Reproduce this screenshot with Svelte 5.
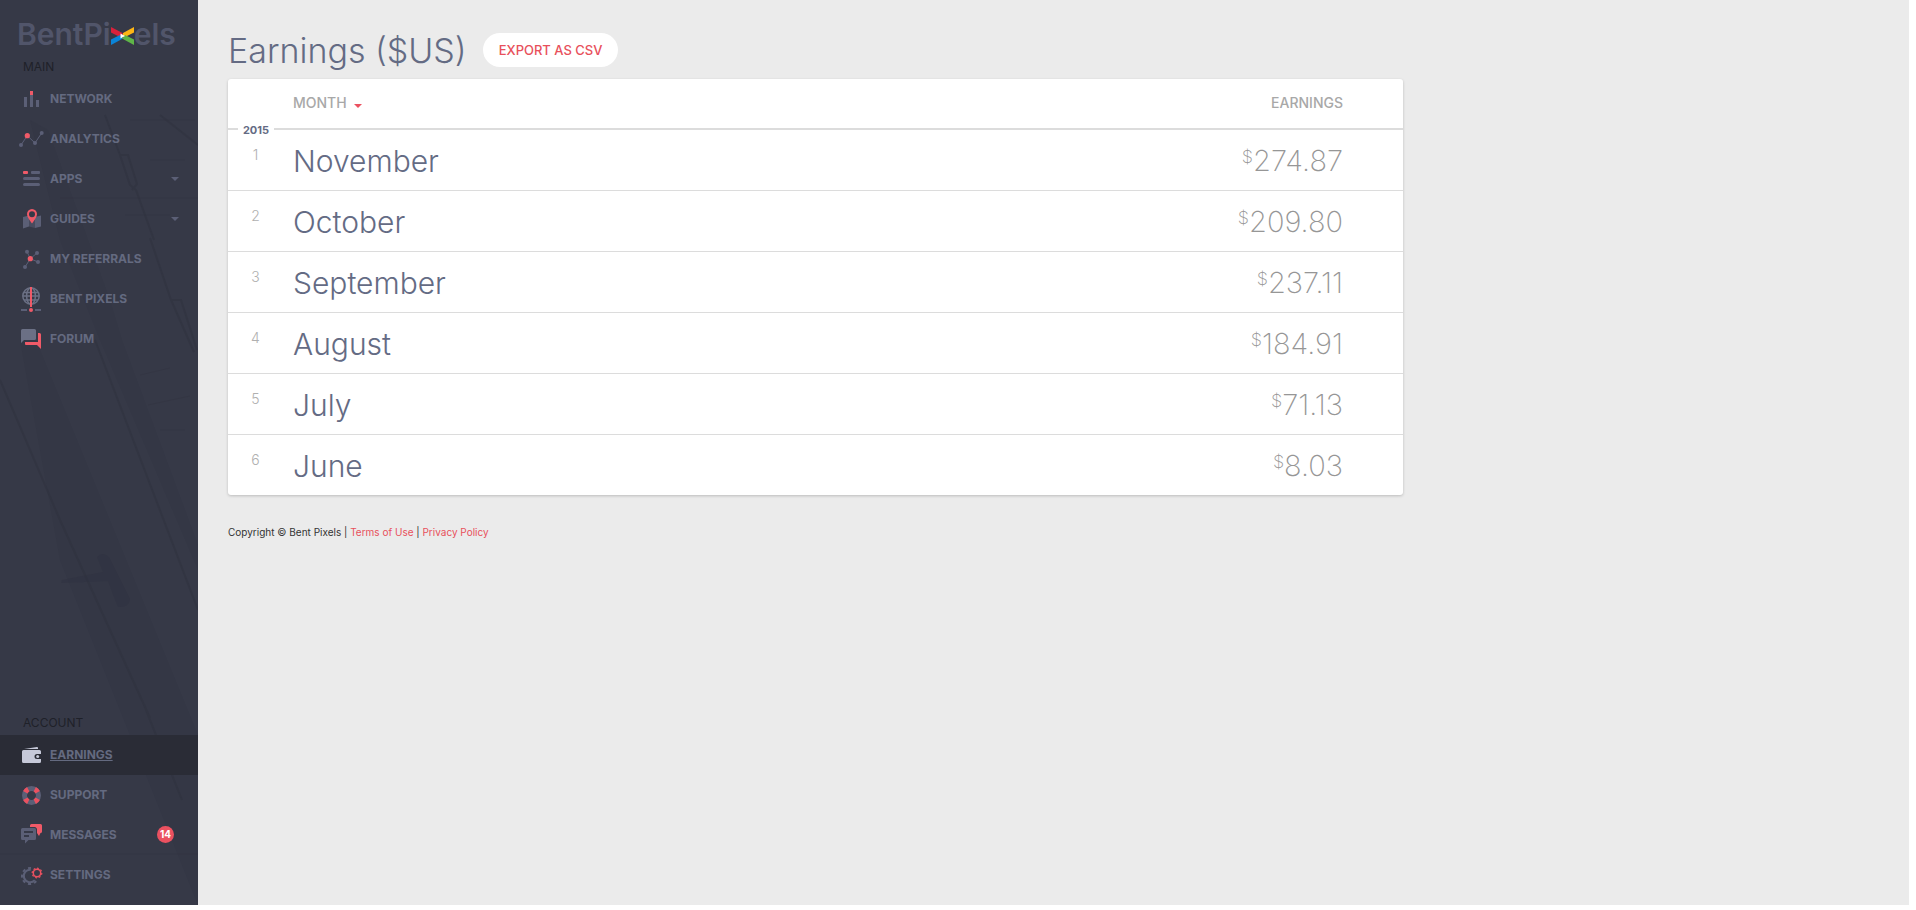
<script lang="ts">
  type Item = { label: string; icon: string; menu?: boolean; active?: boolean; count?: number };

  const mainItems: Item[] = [
    { label: 'NETWORK', icon: 'network' },
    { label: 'ANALYTICS', icon: 'analytics' },
    { label: 'APPS', icon: 'apps', menu: true },
    { label: 'GUIDES', icon: 'guides', menu: true },
    { label: 'MY REFERRALS', icon: 'referrals' },
    { label: 'BENT PIXELS', icon: 'globe' },
    { label: 'FORUM', icon: 'forum' }
  ];

  const accountItems: Item[] = [
    { label: 'EARNINGS', icon: 'wallet', active: true },
    { label: 'SUPPORT', icon: 'support' },
    { label: 'MESSAGES', icon: 'messages', count: 14 },
    { label: 'SETTINGS', icon: 'settings' }
  ];

  const year = 2015;
  const rows = [
    { month: 'November', amount: '274.87' },
    { month: 'October', amount: '209.80' },
    { month: 'September', amount: '237.11' },
    { month: 'August', amount: '184.91' },
    { month: 'July', amount: '71.13' },
    { month: 'June', amount: '8.03' }
  ];
</script>

{#snippet icon(name: string)}
  <svg class="icon" viewBox="0 0 24 24" width="24" height="24" aria-hidden="true">
    {#if name === 'network'}
      <path class="g" d="M5 10h3v10H5zM11 8h3v12h-3zM17 13h3v7h-3z" />
      <path class="r" d="M11 4h3v4h-3z" />
    {:else if name === 'analytics'}
      <path class="gs" d="M2 18L8.3 8.7L16 16L22.7 6" />
      <circle class="g" cx="2" cy="18" r="2" />
      <circle class="g" cx="16" cy="16" r="2" />
      <circle class="g" cx="22.7" cy="6" r="2" />
      <circle class="r" cx="8.3" cy="8.7" r="2.6" />
    {:else if name === 'apps'}
      <rect class="g" x="12" y="4" width="9" height="3" rx="1" />
      <rect class="g" x="4" y="10" width="17" height="3" rx="1.5" />
      <rect class="g" x="4" y="16" width="17" height="3" rx="1.5" />
      <rect class="r" x="4" y="4" width="5" height="3" rx="1" />
    {:else if name === 'guides'}
      <path class="g" d="M4 10l6-1.5v11l-6 2zM16 10l6-1.5v11l-6 1.5z" />
      <path class="shade" d="M10 8.5l6 1.5v11l-6-1.5z" />
      <circle class="hole" cx="13" cy="7.2" r="3.5" />
      <path class="r" fill-rule="evenodd" d="M13 2a5 5 0 0 1 5 5.2c0 3-3 6-5 9.3c-2-3.300-5-6.300-5-9.300a5 5 0 0 1 5-5.200zM13 4.200a3 3 0 1 0 0 6a3 3 0 1 0 0-6z" />
    {:else if name === 'referrals'}
      <path class="gs" d="M8 4.7L11.3 11.7L18 6M6 20L11.3 11.7L19 15" />
      <circle class="g" cx="8" cy="4.7" r="2" />
      <circle class="g" cx="18" cy="6" r="2" />
      <circle class="g" cx="19" cy="15" r="2" />
      <circle class="g" cx="6" cy="20" r="2" />
      <circle class="r" cx="11.3" cy="11.7" r="2.6" />
    {:else if name === 'globe'}
      <g class="gs thick">
        <circle cx="12" cy="9" r="8.2" />
        <ellipse cx="12" cy="9" rx="4.400" ry="8.2" />
        <path d="M5 5.500h14M4 9h16M5 13h14" />
      </g>
      <path class="g" d="M2 22h6v2H2zM16 22h6v2h-6z" />
      <path class="r" d="M11 0h2v20h-2z" />
      <circle class="r" cx="12" cy="23" r="2" />
    {:else if name === 'forum'}
      <path class="g bright" d="M3.500 2h12a1.500 1.500 0 0 1 1.500 1.500v8a1.500 1.500 0 0 1-1.500 1.500H5l-3 3V3.500A1.500 1.500 0 0 1 3.500 2z" />
      <path class="r" d="M19 6h1.500a1.500 1.500 0 0 1 1.500 1.500V22l-4-4H7a1 1 0 0 1-1-1v-2h13z" />
    {:else if name === 'wallet'}
      <path class="w" d="M5 6L18 4a1 1 0 0 1 1 1v1z" />
      <path class="w" d="M4.500 7h16A1.500 1.500 0 0 1 22 8.500v2.500h-4a2.500 2.500 0 0 0 0 5h4v2.500a1.500 1.500 0 0 1-1.500 1.500h-16A1.500 1.500 0 0 1 3 18.500v-10A1.500 1.500 0 0 1 4.500 7z" />
      <circle class="w" cx="18.7" cy="13.5" r="1.5" />
    {:else if name === 'support'}
      <circle class="ring" cx="12.5" cy="12.5" r="7" />
      <circle class="ring red" cx="12.5" cy="12.5" r="7" pathLength="360" stroke-dasharray="34 56" stroke-dashoffset="-28" />
    {:else if name === 'messages'}
      <path class="r" d="M12.500 1h9A1.500 1.500 0 0 1 23 2.500v6a1.500 1.500 0 0 1-1.500 1.500L20 13l-2-3v-3a2.500 2.500 0 0 0-2.500-3H11V2.500A1.500 1.500 0 0 1 12.500 1z" />
      <path class="g" d="M3.500 5h12A1.500 1.500 0 0 1 17 6.500v9a1.500 1.500 0 0 1-1.500 1.500H9.500L6 20.500V17H3.500A1.500 1.500 0 0 1 2 15.500v-9A1.500 1.500 0 0 1 3.500 5z" />
      <path class="cut" d="M5 9h9M5 13h5" />
    {:else if name === 'settings'}
      <path class="gear" d="M11.800 6.700A6.300 6.300 0 1 0 15.800 17.100" />
      <path class="teeth" d="M12 5.100A8 8 0 1 0 17.200 18" />
      <circle class="gear red" cx="18" cy="10" r="3.7" />
      <circle class="teeth red" cx="18" cy="10" r="4.8" pathLength="80" />
    {/if}
  </svg>
{/snippet}

{#snippet menu(items: Item[])}
  <ul>
    {#each items as item}
      <li>
        <a href="#{item.icon}" class:active={item.active} aria-current={item.active ? 'page' : undefined}>
          {@render icon(item.icon)}
          <span class="label">{item.label}</span>
          {#if item.menu}
            <svg class="caret" viewBox="0 0 8 4" width="8" height="4" aria-hidden="true"><path d="M0 0h8L4 4z" /></svg>
          {/if}
          {#if item.count}
            <span class="count">{item.count}</span>
          {/if}
        </a>
      </li>
    {/each}
  </ul>
{/snippet}

<div class="page">
  <aside>
    <svg class="backdrop" viewBox="0 0 198 905" preserveAspectRatio="xMidYMid slice" aria-hidden="true">
      <path class="beam" d="M36 340L198 735V905L60 560L20 340z" />
      <path class="beam" d="M122 340L198 545V570L100 340L60 240L30 120L48 130L110 300z" />
      <path class="line" d="M0 380L60 520L150 718M95 340L198 610M144 705L182 800" />
      <path class="line" d="M105 115L120 155L130 185L136 190L154 240M120 155L128 155L137 184L132 190M150 238L171 300L194 352M171 300L181 300L197 350M160 115L198 145" />
      <path class="line faint" d="M140 375L170 368M148 405L190 396M160 430H185M130 120H195M150 160H185M125 215H170M0 854H198M60 198H198" />
      <path class="handle" d="M97 557q5-6 12 0l21 42q-1 9-12 8q-5-12-10-26L61 583l1-3l41-8z" />
    </svg>

    <a class="logo" href="#home" aria-label="BentPixels">
      <span>BentPi</span>
      <svg viewBox="0 0 23 18" width="23" height="18" aria-hidden="true">
        <path fill="#d9213b" d="M0 0L11.5 6V9L9 10L0 5.5z" />
        <path fill="#fdb515" d="M23 0L12 6V9L14 10L23 5.5z" />
        <path fill="#0a84d8" d="M0 18V12.5L9 8L12 11.5z" />
        <path fill="#5fb548" d="M23 18V12.5L14 8L11 11.5z" />
        <path fill="#fff" d="M9.500 6.500L14 9L9.500 11.500z" />
      </svg>
      <span>els</span>
    </a>

    <nav aria-label="Main">
      <h2>MAIN</h2>
      {@render menu(mainItems)}
    </nav>

    <nav class="account" aria-label="Account">
      <h2>ACCOUNT</h2>
      {@render menu(accountItems)}
    </nav>
  </aside>

  <main>
    <header>
      <h1>Earnings ($US)</h1>
      <button type="button">EXPORT AS CSV</button>
    </header>

    <div class="card">
      <table>
        <thead>
          <tr>
            <th class="index"></th>
            <th class="month" scope="col">
              MONTH
              <svg class="sort" viewBox="0 0 8 4" width="8" height="4" aria-hidden="true"><path d="M0 0h8L4 4z" /></svg>
            </th>
            <th class="amount" scope="col">EARNINGS</th>
          </tr>
        </thead>
        <tbody>
          {#each rows as row, i}
            <tr>
              <td class="index">
                {#if i === 0}<span class="year">{year}</span>{/if}
                {i + 1}
              </td>
              <td class="month">{row.month}</td>
              <td class="amount"><sup>$</sup>{row.amount}</td>
            </tr>
          {/each}
        </tbody>
      </table>
    </div>

    <footer>
      Copyright © Bent Pixels | <a href="#terms">Terms of Use</a> | <a href="#privacy">Privacy Policy</a>
    </footer>
  </main>
</div>

<style>
  :global(body) {
    background: #fff;
  }

  .page {
    --red: #eb5160;
    --muted: #5b5f76;
    display: flex;
    box-sizing: border-box;
    min-height: 100vh;
    border: solid #fff;
    border-width: 0 7px 5px 0;
    background: #ebebeb;
    font-family: Inter, "Liberation Sans", sans-serif;
    color: #646b84;
  }

  /* sidebar */
  aside {
    position: relative;
    display: flex;
    flex-direction: column;
    flex: 0 0 198px;
    box-sizing: border-box;
    padding: 16px 0 10px;
    background: #363947;
    overflow: hidden;
  }

  .backdrop {
    position: absolute;
    inset: 0;
    width: 100%;
    height: 100%;
  }

  .beam {
    fill: #323443;
    opacity: 0.35;
  }

  .line {
    fill: none;
    stroke: #2e303d;
    stroke-width: 2;
    opacity: 0.4;
  }

  .line.faint {
    stroke-width: 1;
    opacity: 0.3;
  }

  .handle {
    fill: #2f3140;
    opacity: 0.45;
  }

  .logo {
    position: relative;
    display: flex;
    align-items: center;
    margin-left: 17px;
    height: 36px;
    font-size: 30px;
    font-weight: 600;
    line-height: 36px;
    color: #51556a;
    text-decoration: none;
  }

  .logo svg {
    margin-top: 4px;
  }

  nav {
    position: relative;
  }

  .account {
    margin-top: auto;
  }

  h2 {
    margin: 0;
    padding: 6px 0 4px 23px;
    font-size: 12px;
    font-weight: 400;
    line-height: 17px;
    color: #1f2129;
  }

  ul {
    margin: 0;
    padding: 0;
    list-style: none;
  }

  li a {
    display: flex;
    align-items: center;
    height: 40px;
    padding: 0 19px;
    gap: 7px;
    font-size: 12px;
    font-weight: 700;
    color: #646a80;
    text-decoration: none;
  }

  li a.active {
    background: #2a2c36;
  }

  .active .label {
    text-decoration: underline;
  }

  .label {
    flex: 1;
    padding-bottom: 2px;
  }

  .caret {
    fill: #5b5f76;
  }

  .count {
    width: 17px;
    height: 17px;
    margin: 0 5px 2px 0;
    border-radius: 50%;
    background: var(--red);
    font-size: 10px;
    line-height: 17px;
    text-align: center;
    color: #fff;
  }

  .icon {
    flex: none;
    overflow: visible;
  }

  .g {
    fill: var(--muted);
  }

  .bright {
    fill: #6b7085;
  }

  .r {
    fill: #f05a68;
  }

  .w {
    fill: #c6c9d9;
  }

  .shade {
    fill: #484b5e;
  }

  .hole {
    fill: #363947;
  }

  .gs {
    fill: none;
    stroke: var(--muted);
  }

  .thick {
    stroke: #6b7085;
    stroke-width: 1.5;
  }

  .ring {
    fill: none;
    stroke: var(--muted);
    stroke-width: 5;
  }

  .cut {
    fill: none;
    stroke: #363947;
    stroke-width: 2;
  }

  .gear {
    fill: none;
    stroke: var(--muted);
    stroke-width: 2;
  }

  .teeth {
    fill: none;
    stroke: var(--muted);
    stroke-width: 2;
    stroke-dasharray: 3 3;
  }

  .gear.red {
    stroke-width: 1.5;
  }

  .teeth.red {
    stroke-width: 1.2;
    stroke-dasharray: 5 5;
  }

  .red {
    stroke: var(--red);
  }

  /* content */
  main {
    flex: 1;
    min-width: 0;
    padding: 23px 30px;
  }

  header {
    display: flex;
    align-items: center;
    gap: 16px;
    height: 56px;
  }

  h1 {
    margin: 0;
    font-size: 34px;
    font-weight: 300;
    line-height: 44px;
  }

  button {
    height: 34px;
    margin-bottom: 2px;
    padding: 0 16px;
    border: 0;
    border-radius: 17px;
    background: #fff;
    font: 500 13px Inter, "Liberation Sans", sans-serif;
    color: #e8505b;
  }

  .card {
    max-width: 1175px;
    border-radius: 3px;
    background: #fff;
    box-shadow: 0 1px 3px rgba(0, 0, 0, 0.2);
  }

  table {
    width: 100%;
    border-collapse: separate;
    border-spacing: 0;
  }

  th,
  td {
    box-sizing: border-box;
    padding: 0;
    text-align: left;
  }

  th {
    height: 51px;
    padding-bottom: 2px;
    border-bottom: 2px solid #dcdcdc;
    font-size: 14px;
    font-weight: 500;
    color: #a8a8a8;
  }

  td {
    height: 61px;
    padding-top: 2px;
    border-bottom: 1px solid #dcdcdc;
    font-size: 30px;
    font-weight: 300;
    line-height: 36px;
  }

  tr:last-child td {
    height: 60px;
    border-bottom: 0;
  }

  .sort {
    margin-left: 4px;
    fill: var(--red);
  }

  .index {
    width: 65px;
  }

  td.index {
    position: relative;
    padding: 16px 10px 0 0;
    font-size: 14px;
    line-height: 18px;
    text-align: center;
    vertical-align: top;
    color: #b0b0b0;
  }

  .year {
    position: absolute;
    top: -8px;
    left: 10px;
    width: 36px;
    background: #fff;
    font-size: 11px;
    font-weight: 700;
    line-height: 16px;
    color: #646b84;
  }

  .amount {
    padding-right: 60px;
    text-align: right;
  }

  td.amount {
    font-size: 29px;
    font-weight: 200;
    color: #969696;
  }

  sup {
    font-size: 18px;
    line-height: 0;
    vertical-align: 8px;
  }

  footer {
    margin-top: 29px;
    font-size: 10px;
    font-weight: 400;
    line-height: 16px;
    color: #333;
  }

  footer a {
    color: #e8505b;
    text-decoration: none;
  }
</style>
